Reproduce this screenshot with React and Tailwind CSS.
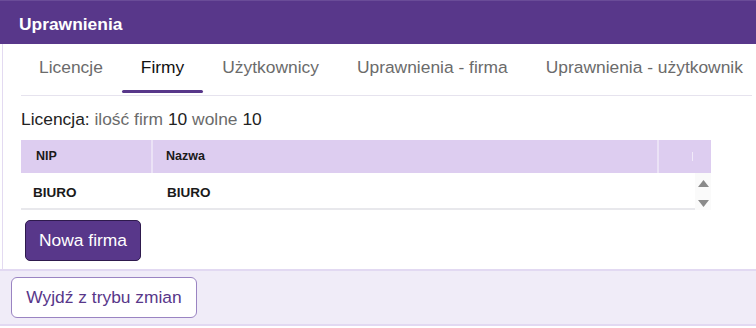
import React, { useState } from 'react'

const tabs = ["Licencje", "Firmy", "Użytkownicy", "Uprawnienia - firma", "Uprawnienia - użytkownik"]

function Tabs() {
  const [active, setActive] = useState(1)
  return (
    <ul className="flex ml-[18px] mr-[4px] h-[52px] border-b border-[#e6e3ee] overflow-hidden">
      {tabs.map((t, i) => (
        <li
          key={t}
          onClick={() => setActive(i)}
          className={`relative shrink-0 flex items-center px-[19px] first:pl-[18px] pb-[4px] text-[17.4px] cursor-pointer whitespace-nowrap ${active == i ? "text-[#111]" : "text-[#6b6b6b]"}`}
        >
          {t}
          {active == i && <span className="absolute left-0 right-0 bottom-[2px] h-[3px] rounded-full bg-[#58378a]"></span>}
        </li>
      ))}
    </ul>
  )
}

function Table() {
  return (
    <div className="ml-[18px] w-[690px] font-bold text-[#1a1a1a]">
      <div className="flex h-[33px] bg-[#ddcdf0] items-center text-[12.5px]">
        <div className="w-[132px] h-full flex items-center pl-[15px] border-r-2 border-[#ebe2f6]">NIP</div>
        <div className="w-[506px] h-full flex items-center pl-[13px] border-r-2 border-[#ebe2f6]">Nazwa</div>
        <div className="flex-1 flex justify-center pl-[14px]"><span className="block w-px h-[9px] bg-[#f1eaf9]"></span></div>
      </div>
      <div className="flex h-[37px] text-[13.5px]">
        <div className="flex flex-1 items-center pt-[5px] border-b-2 border-[#e8e8ec]">
          <div className="w-[132px] pl-[12px]">BIURO</div>
          <div className="pl-[14px]">BIURO</div>
        </div>
        <div className="w-[16px] bg-[#fafafa] flex flex-col items-center justify-between pt-[7px] pb-[3px]">
          <svg width="11" height="7" viewBox="0 0 11 7"><path d="M5.5 0 L11 7 L0 7 Z" fill="#8a8a8a" /></svg>
          <svg width="11" height="7" viewBox="0 0 11 7"><path d="M0 0 L11 0 L5.5 7 Z" fill="#8a8a8a" /></svg>
        </div>
      </div>
    </div>
  )
}

export default function App() {
  return (
    <div className="w-[756px] h-[328px] overflow-hidden bg-white font-['Liberation_Sans',Arial,sans-serif]">
      <header className="h-[44px] bg-[#58378a] border-t border-[#6a4c98] flex items-center pl-[19px] pt-[3px]">
        <h1 className="text-white text-[17.4px] font-bold">Uprawnienia</h1>
      </header>
      <div className="ml-[2px] border-l border-[#e3daf1]">
        <Tabs />
        <p className="ml-[18px] mt-[10px] h-[34px] text-[17.4px] text-[#222]">
          Licencja: <span className="text-[#6b6b6b]">ilość firm</span> 10 <span className="text-[#6b6b6b]">wolne</span> 10
        </p>
        <Table />
        <div className="pl-[22px] pt-[10px] pb-[8px]">
          <button className="h-[41px] w-[116px] rounded-[5px] bg-[#58378a] border border-[#2e1a4d] text-white text-[17.4px]">Nowa firma</button>
        </div>
      </div>
      <footer className="h-[57px] bg-[#f0ecf8] border-t-2 border-b-2 border-[#e2d9f2] flex items-center pl-[11px]">
        <button className="h-[41px] w-[186px] rounded-[6px] bg-white border border-[#9a84c2] text-[#58378a] text-[17.4px]">Wyjdź z trybu zmian</button>
      </footer>
    </div>
  )
}
